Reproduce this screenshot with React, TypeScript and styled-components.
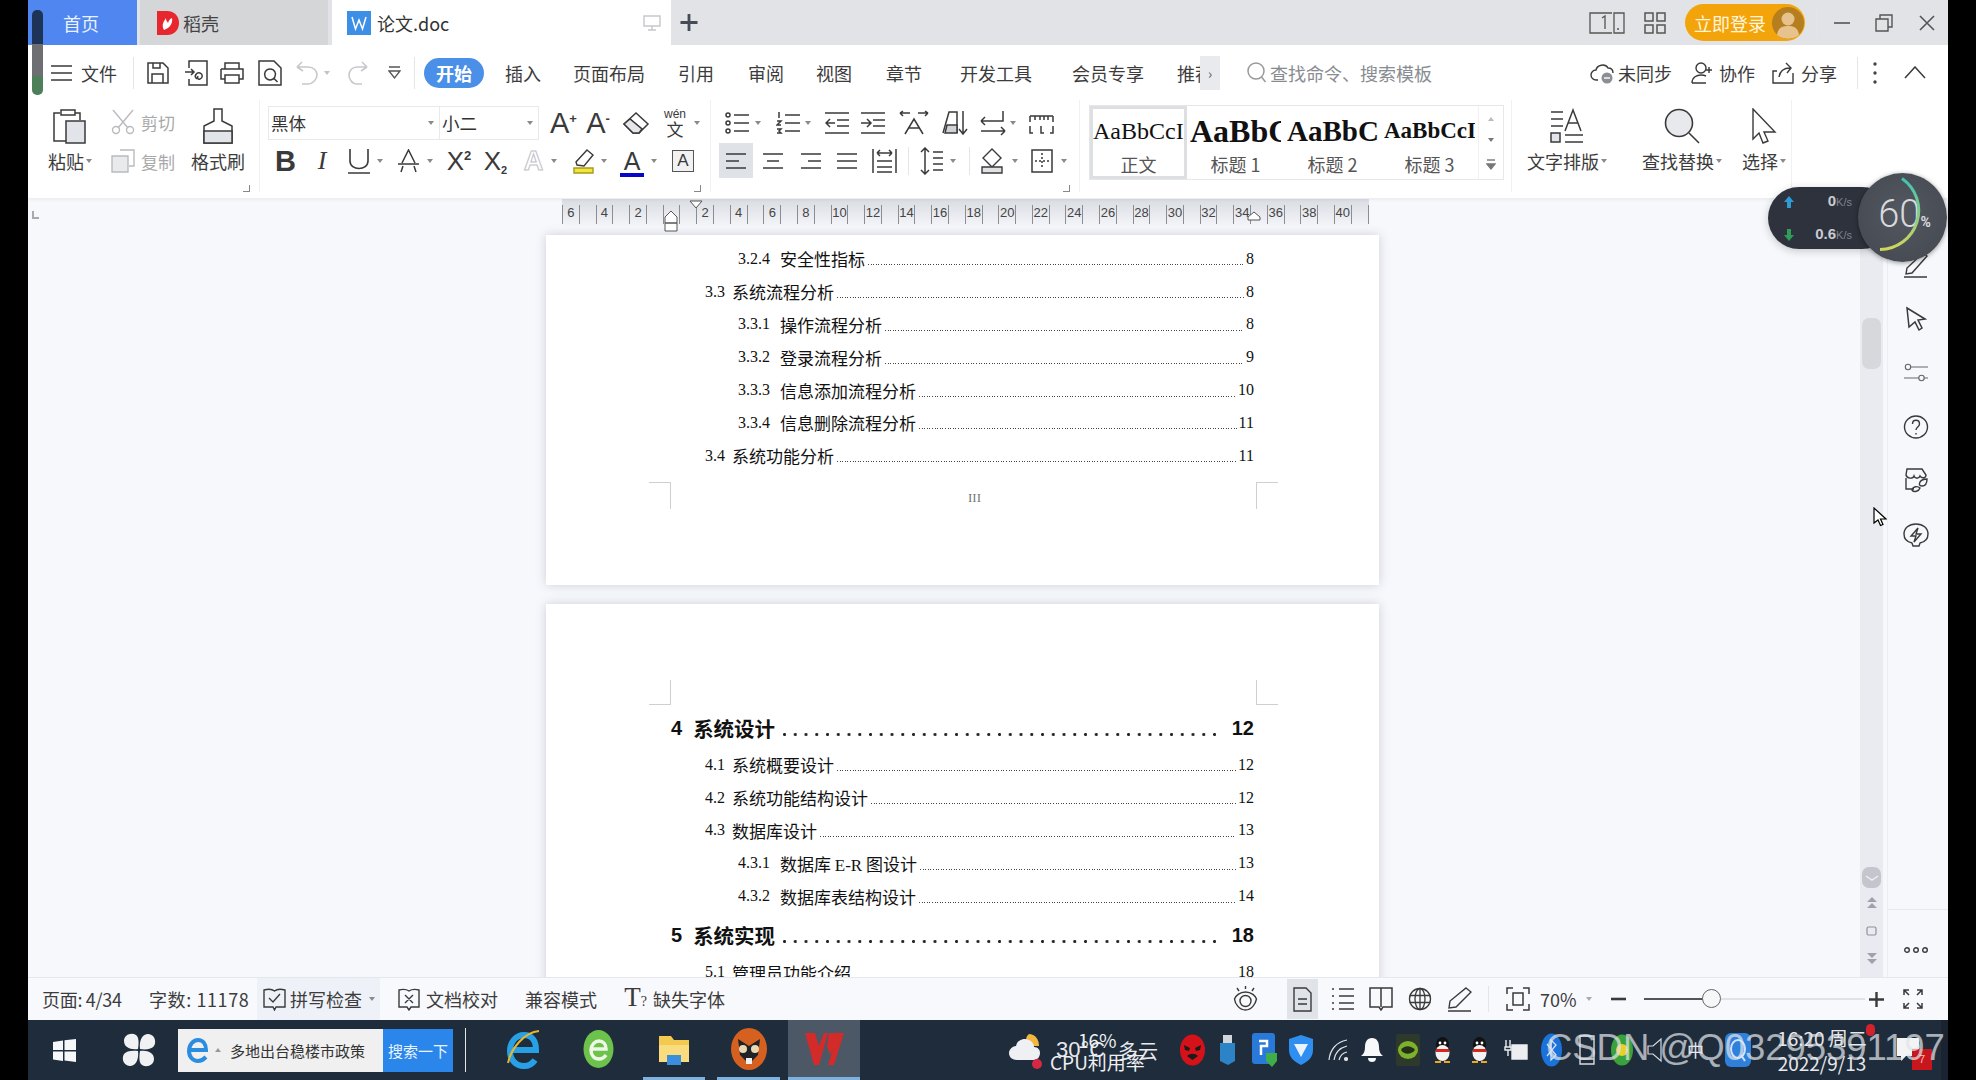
import React from 'react';
import styled, { createGlobalStyle } from 'styled-components';

const CJK = `"Noto Sans CJK SC", "Liberation Sans", sans-serif`;
const SERIF = `"Liberation Serif", "Noto Sans CJK SC", serif`;

const Global = createGlobalStyle`
  html, body { margin: 0; padding: 0; background: #000; overflow: hidden; }
  body { font-family: ${CJK}; color: #333; }
`;

const Root = styled.div`
  position: relative; width: 1976px; height: 1080px; background: #000; overflow: hidden;
  display: flex; justify-content: center;
`;
const Main = styled.div`
  width: 1920px; height: 1080px; display: flex; flex-direction: column; background: #fff;
`;

const Ic = styled.svg<{ $ml?: number; $sw?: number; $c?: string }>`
  flex: none; display: block; margin-left: ${p => p.$ml ?? 0}px; fill: none;
  stroke: ${p => p.$c ?? '#3a3a3a'}; stroke-width: ${p => p.$sw ?? 1.4};
`;
const Caret = styled.i<{ $ml?: number; $c?: string; $up?: boolean }>`
  flex: none; display: block; width: 0; height: 0; margin-left: ${p => p.$ml ?? 0}px;
  border-left: 3px solid transparent; border-right: 3px solid transparent;
  border-top: 4px solid ${p => p.$c ?? '#8a8a8a'};
  ${p => (p.$up ? 'transform: rotate(180deg);' : '')}
`;
const VSep = styled.i<{ $ml?: number; $h?: number }>`
  flex: none; display: block; width: 1px; height: ${p => p.$h ?? 32}px;
  margin-left: ${p => p.$ml ?? 0}px; background: #e4e5e8;
`;

/* ---------- tab bar ---------- */
const TabBar = styled.div`
  flex: none; height: 45px; display: flex; align-items: stretch; background: #e1e3e6;
`;
const HomeTab = styled.div`
  width: 109px; background: #4f86ef; color: #eaf1ff; font-size: 18px;
  display: flex; align-items: center; padding-left: 35px; box-sizing: border-box;
`;
const ShellTab = styled.div`
  width: 188px; margin-left: 3px; background: #d5d6d8; font-size: 18px; color: #444;
  display: flex; align-items: center; padding-left: 17px; box-sizing: border-box; gap: 4px;
`;
const DocTab = styled.div`
  width: 339px; margin-left: 4px; background: #fff; font-size: 18px; color: #333;
  display: flex; align-items: center; padding-left: 15px; box-sizing: border-box; gap: 6px;
`;
const DocName = styled.span`flex: 1;`;
const CastIcon = styled(Ic)`margin-right: 10px;`;
const WinCluster = styled.div`
  margin-left: auto; display: flex; align-items: center; padding-right: 13px;
`;
const LoginPill = styled.div`
  margin-left: 19px; width: 120px; height: 37px; border-radius: 19px; background: #f4a40b;
  color: #fff6dc; font-size: 18px; display: flex; align-items: center; padding-left: 9px;
  box-sizing: border-box; gap: 6px;
`;

/* ---------- menu bar ---------- */
const MenuBar = styled.div`
  flex: none; height: 55px; display: flex; align-items: center; background: #fff;
`;
const MenuText = styled.span<{ $ml?: number; $c?: string }>`
  flex: none; font-size: 18px; margin-left: ${p => p.$ml ?? 0}px; color: ${p => p.$c ?? '#3c3c3c'};
  white-space: nowrap; line-height: 30px;
`;
const ClippedTab = styled(MenuText)`width: 23px; overflow: hidden;`;
const ActivePill = styled.span<{ $ml: number }>`
  flex: none; margin-left: ${p => p.$ml}px; width: 60px; height: 30px; border-radius: 15px;
  background: #4a8fe8; color: #fff; font-size: 18px; font-weight: 700;
  display: flex; align-items: center; justify-content: center;
`;
const MoreTabs = styled.span`
  flex: none; width: 20px; height: 34px; background: #e9eaed; color: #555; font-size: 14px;
  display: flex; align-items: center; justify-content: center;
`;
const MenuRight = styled.div`
  margin-left: auto; padding-right: 22px; display: flex; align-items: center;
`;

/* ---------- ribbon ---------- */
const Ribbon = styled.div`
  flex: none; height: 98px; display: flex; background: #fff; position: relative; z-index: 2;
  box-shadow: 0 2px 3px rgba(0, 0, 0, .05);
`;
const Group = styled.div<{ $w: number; $ml?: number }>`
  flex: none; width: ${p => p.$w}px; margin-left: ${p => p.$ml ?? 0}px; position: relative;
  box-sizing: border-box; border-right: 1px solid #f0f1f3; height: 92px;
`;
const FlowGroup = styled(Group)`display: flex; align-items: flex-start;`;
const Launcher = styled.i`
  position: absolute; right: 9px; bottom: 0; width: 6px; height: 6px;
  border-right: 1px solid #888; border-bottom: 1px solid #888;
`;
const LargeTool = styled.div<{ $w: number; $ml: number }>`
  flex: none; width: ${p => p.$w}px; margin-left: ${p => p.$ml}px; padding-top: 7px;
  display: flex; flex-direction: column; align-items: center;
`;
const LargeIcon = styled.div`height: 37px; display: flex; align-items: center;`;
const LargeLabel = styled.div`
  margin-top: 3px; height: 28px; font-size: 18px; color: #3c3c3c; display: flex; align-items: center;
  gap: 2px; white-space: nowrap;
`;
const SmallStack = styled.div<{ $ml: number }>`
  flex: none; margin-left: ${p => p.$ml}px; padding-top: 8px; display: flex; flex-direction: column; gap: 11px;
`;
const SmallTool = styled.div`
  display: flex; align-items: center; gap: 6px; height: 28px; color: #a9a9a9; font-size: 17px;
`;
const ToolRows = styled.div`padding-top: 5px; display: flex; flex-direction: column; gap: 3px;`;
const ToolRow = styled.div`height: 35px; display: flex; align-items: center;`;
const FontBox = styled.div`
  flex: none; margin-left: 8px; width: 271px; height: 34px; border: 1px solid #e8e9ec; box-sizing: border-box;
  display: flex; align-items: center; font-size: 17.5px; color: #333;
`;
const FontName = styled.div`
  width: 171px; height: 100%; box-sizing: border-box; border-right: 1px solid #e8e9ec; padding-left: 2px; padding-right: 5px;
  display: flex; align-items: center; justify-content: space-between;
`;
const FontSizeBox = styled(FontName)`width: 98px; border-right: 0;`;
const Letter = styled.span<{ $ml?: number; $w: number; $s?: number; $c?: string; $b?: boolean; $i?: boolean; $serif?: boolean; $cjk?: boolean }>`
  flex: none; display: block; width: ${p => p.$w}px; margin-left: ${p => p.$ml ?? 0}px;
  font-family: ${p => (p.$cjk ? CJK : p.$serif ? SERIF : `"Liberation Sans", sans-serif`)};
  font-size: ${p => p.$s ?? 26}px; font-weight: ${p => (p.$b ? 700 : 400)}; font-style: ${p => (p.$i ? 'italic' : 'normal')};
  color: ${p => p.$c ?? '#3a3a3a'}; line-height: 30px; text-align: center; white-space: nowrap;
  position: relative;
  sup { font-size: 13px; line-height: 0; font-weight: 700; vertical-align: 10px; }
  sub { font-size: 11px; line-height: 0; font-weight: 700; vertical-align: -4px; }
  small { font-size: 14px; }
`;
const OutlineLetter = styled(Letter)`
  color: transparent; -webkit-text-stroke: 1px #bfc1c5; font-weight: 700;
`;
const UnderBar = styled.i<{ $c: string; $h?: number }>`
  position: absolute; left: 0; right: 0; bottom: -1px; height: ${p => p.$h ?? 2}px; background: ${p => p.$c};
`;
const BoxedLetter = styled(Letter)`
  border: 1.5px solid #555; box-sizing: border-box; height: 22px; line-height: 19px; background: #f2f2f2;
`;
const Phonetic = styled.div<{ $ml: number }>`
  flex: none; margin-left: ${p => p.$ml}px; width: 30px; display: flex; flex-direction: column; align-items: center; color: #3a3a3a;
`;
const PhoneticTop = styled.span`font: 12px/12px "Liberation Sans", sans-serif;`;
const PhoneticBase = styled.span`font-size: 17px; line-height: 18px;`;
const ActiveAlign = styled.div<{ $ml: number }>`
  flex: none; width: 34px; height: 35px; margin-left: ${p => p.$ml}px; background: #dfe3e8;
  display: flex; align-items: center; justify-content: center;
`;
const StyleGallery = styled.div`
  flex: none; margin-left: 9px; margin-top: 5px; width: 415px; height: 75px; box-sizing: border-box;
  border: 1px solid #e6e7ea; display: flex;
`;
const StyleCell = styled.div<{ $active?: boolean }>`
  flex: none; width: 97px; box-sizing: border-box; overflow: hidden; height: 100%;
  border: 3px solid ${p => (p.$active ? '#dedfe1' : 'transparent')};
  display: flex; flex-direction: column; align-items: center;
`;
const StyleSample = styled.div<{ $s: number; $b?: boolean }>`
  width: 91px; overflow: hidden; white-space: nowrap; height: 43px; line-height: 44px; color: #111; flex: none;
  font-family: ${SERIF}; font-size: ${p => p.$s}px; font-weight: ${p => (p.$b ? 700 : 400)}; text-align: left;
`;
const StyleName = styled.div`font-size: 18px; color: #555; line-height: 24px;`;
const GalleryArrows = styled.div`
  flex: 1; display: flex; flex-direction: column; align-items: center; justify-content: space-between;
  padding: 11px 0 8px; border-left: 1px solid #f0f1f3;
`;

/* ---------- workspace ---------- */
const Workspace = styled.div`flex: 1; min-height: 0; display: flex; background: #f6f8fc;`;
const Canvas = styled.div`
  flex: 1; position: relative; overflow: hidden; display: flex; flex-direction: column;
`;
const Ruler = styled.div`flex: none; height: 37px; padding-left: 534px; position: relative; display: flex;`;
const RulerBand = styled.div`
  margin-top: 1px; height: 27px; display: flex; padding-top: 6px; box-sizing: border-box;
  background: linear-gradient(#d9dce2, #f4f5f9);
`;
const RulerCell = styled.div`flex: none; width: 33.57px; display: flex; height: 19px;`;
const RulerHalf = styled.div`
  width: 50%; box-sizing: border-box; border-left: 1px solid #8b8d92; font: 13px/15px "Liberation Sans", sans-serif;
  color: #444; text-align: center; white-space: nowrap;
`;
const RulerEnd = styled.i`flex: none; width: 1px; height: 19px; background: #8b8d92;`;
const RulerMark = styled.svg<{ $x: number; $y: number }>`
  position: absolute; left: ${p => p.$x}px; top: ${p => p.$y}px; fill: #fff; stroke: #555; stroke-width: 1;
`;
const LCorner = styled.i`
  position: absolute; left: 4px; top: 13px; width: 5px; height: 6px;
  border-left: 2px solid #aaa; border-bottom: 2px solid #aaa;
`;
const Page = styled.div<{ $h: number; $mt?: number; $pt?: number }>`
  flex: none; margin-left: 518px; margin-top: ${p => p.$mt ?? 0}px; width: 833px; height: ${p => p.$h}px;
  padding-top: ${p => p.$pt ?? 0}px;
  background: #fff; box-shadow: 0 0 10px rgba(80, 85, 100, .24); box-sizing: border-box;
`;
const TocRow = styled.div<{ $level: number }>`
  display: flex; align-items: center; box-sizing: border-box; color: #111;
  height: ${p => (p.$level === 1 ? 41 : 32.8)}px;
  margin-top: ${p => (p.$level === 1 ? 2.5 : 0)}px;
  padding-left: ${p => (p.$level === 1 ? 125 : p.$level === 2 ? 159 : 192)}px; padding-right: 125px;
  font-size: ${p => (p.$level === 1 ? 20.5 : 17)}px; font-weight: ${p => (p.$level === 1 ? 700 : 400)};
`;
const TocNum = styled.span<{ $level: number }>`
  font-family: ${p => (p.$level === 1 ? `"Liberation Sans", sans-serif` : SERIF)};
  font-size: ${p => (p.$level === 1 ? 20 : 16)}px;
  margin-right: ${p => (p.$level === 1 ? 11 : p.$level === 2 ? 7 : 10)}px;
`;
const TocName = styled.span`white-space: pre;`;
const Latin = styled.span`font-family: ${SERIF};`;
const Leader = styled.i<{ $heavy?: boolean }>`
  flex: 1; display: block; margin: 12px ${p => (p.$heavy ? 16 : 2)}px 0 ${p => (p.$heavy ? 8 : 3)}px;
  height: ${p => (p.$heavy ? 3 : 1)}px;
  background-image: ${p =>
    p.$heavy
      ? 'radial-gradient(circle at 1.5px 1.5px, #222 1.3px, transparent 1.6px)'
      : 'repeating-linear-gradient(90deg, #444 0 1px, transparent 1px 2.6px)'};
  background-size: ${p => (p.$heavy ? '10.75px 3px' : 'auto')};
`;
const TocPage = styled.span<{ $level: number }>`
  font-family: ${p => (p.$level === 1 ? `"Liberation Sans", sans-serif` : SERIF)};
  font-size: ${p => (p.$level === 1 ? 20 : 16)}px;
`;
const MarginRow = styled.div<{ $mt: number; $h: number }>`
  margin: ${p => p.$mt}px 101px 0 103px; height: ${p => p.$h}px; display: flex; justify-content: space-between; align-items: center;
`;
const CropMark = styled.i<{ $pos: 'tl' | 'tr' | 'bl' | 'br' }>`
  display: block; width: 22px; height: 100%; box-sizing: border-box;
  ${p => (p.$pos[0] === 't' ? 'border-top' : 'border-bottom')}: 1px solid #cfcfcf;
  ${p => (p.$pos[1] === 'l' ? 'border-right' : 'border-left')}: 1px solid #cfcfcf;
`;
const Folio = styled.span`font: 13px ${SERIF}; color: #777; margin: 5px 0 0 22px;`;
const ScrollTrack = styled.div`
  flex: none; width: 23px; margin-right: 4px; background: #e9ebf0; display: flex; flex-direction: column;
  align-items: center; padding: 120px 0 13px; box-sizing: border-box;
`;
const ScrollThumb = styled.div`width: 19px; height: 51px; border-radius: 7px; background: #d6d8dc;`;
const ScrollDown = styled.div`
  margin-top: auto; width: 19px; height: 21px; border-radius: 7px; background: #c3c6cc;
  display: flex; align-items: center; justify-content: center;
`;
const ScrollGlyphs = styled.div`margin-top: 9px; display: flex; flex-direction: column; gap: 16.5px; align-items: center;`;
const SideBar = styled.div`
  flex: none; width: 61px; border-left: 1px solid #eceef2; box-sizing: border-box; display: flex; flex-direction: column; align-items: center;
`;
const SideIcons = styled.div`padding: 54px 5px 0 0; display: flex; flex-direction: column; gap: 28px; align-items: center;`;
const SideFoot = styled.div`
  margin-top: auto; width: 100%; height: 68px; border-top: 1px solid #e7e9ed; display: flex; justify-content: center; padding: 37px 5px 0 0; box-sizing: border-box;
`;

/* ---------- status bar ---------- */
const StatusBar = styled.div`
  flex: none; height: 43px; background: #f8f9fc; border-top: 1px solid #e6e7eb; box-sizing: border-box;
  display: flex; align-items: center; font-size: 18px; color: #3c3c3c;
`;
const StatusText = styled.span<{ $ml: number; $w?: number; $ls?: number }>`
  flex: none; margin-left: ${p => p.$ml}px; white-space: nowrap; letter-spacing: ${p => p.$ls ?? 0}px;
  ${p => (p.$w ? `width: ${p.$w}px;` : '')}
`;
const SpellCheck = styled.div`
  flex: none; margin-left: 7px; width: 123px; height: 42px; background: #eef2f8; display: flex; align-items: center; padding-left: 6px; box-sizing: border-box; gap: 4px;
`;
const StatusRight = styled.div`margin-left: auto; padding-right: 24px; display: flex; align-items: center;`;
const ViewActive = styled.div`
  flex: none; width: 31px; height: 40px; margin-left: 29px; background: #e0e3e8; display: flex; align-items: center; justify-content: center;
`;
const ZoomTrack = styled.div`
  flex: none; margin-left: 18px; width: 221px; height: 2px; background: #e1e2e6; position: relative;
  &::before { content: ''; position: absolute; left: 0; top: 0; width: 67px; height: 2px; background: #555; }
`;
const ZoomKnob = styled.i`
  position: absolute; left: 58px; top: -9px; width: 19px; height: 19px; border-radius: 50%; box-sizing: border-box;
  background: #f6f7f9; border: 1.5px solid #666;
`;

/* ---------- taskbar ---------- */
const Taskbar = styled.div`
  flex: none; height: 60px; background: #1f2c3b; display: flex; align-items: center; color: #e7e9ec;
  box-shadow: inset -7px 0 0 #1a2430;
`;
const SearchBox = styled.div`
  flex: none; margin-left: 22px; width: 275px; height: 43px; background: #f0f0f0; display: flex; align-items: center;
`;
const SearchHint = styled.span`flex: 1; font-size: 15px; color: #333; display: flex; align-items: center; white-space: nowrap;`;
const SearchPhrase = styled.span`margin-left: 9px;`;
const SearchBtn = styled.span`
  flex: none; width: 70px; height: 100%; background: #2a86ea; color: #eaf4ff; font-size: 15px;
  display: flex; align-items: center; justify-content: center;
`;
const TaskApp = styled.div<{ $ml: number; $w: number; $open?: boolean; $active?: boolean }>`
  flex: none; margin-left: ${p => p.$ml}px; width: ${p => p.$w}px; height: 60px; box-sizing: border-box;
  display: flex; align-items: center; justify-content: center;
  background: ${p => (p.$active ? '#4d5866' : 'transparent')};
  border-bottom: 3px solid ${p => (p.$open ? '#7db2e0' : 'transparent')};
`;
const Weather = styled.div`
  flex: none; position: relative; margin-left: 11px; width: 102px; height: 60px; display: flex; align-items: center; justify-content: space-between; font-size: 20px;
`;
const Temp = styled.span`font-family: "Liberation Sans", sans-serif; font-size: 22px;`;
const CpuTop = styled.span`position: absolute; left: 22px; top: 6px; font-size: 19px; color: #eef0f3;`;
const CpuBottom = styled.span`position: absolute; left: -6px; top: 28px; font-size: 19px; color: #eef0f3; white-space: nowrap;`;
const Clock = styled.div`
  flex: none; position: relative; margin-left: 25px; width: 92px; font: 19px/25px ${CJK}; color: #e7e9ec; text-align: center; white-space: nowrap;
`;
const TrayBadge = styled.i`position: absolute; right: -7px; top: -1px; width: 9px; height: 12px; border-radius: 5px; background: #d3232a;`;
const MsgWrap = styled.div`flex: none; position: relative; margin-left: 29px; width: 22px; height: 24px;`;
const MsgBadge = styled.span`
  position: absolute; left: 15px; top: 11px; width: 20px; height: 21px; background: #c8161d; color: #fbb;
  font: 11px/21px "Liberation Sans", sans-serif; text-align: center;
`;

/* ---------- overlays ---------- */
const Gadget = styled.div`position: absolute; left: 1768px; top: 173px; width: 179px; height: 89px; z-index: 5;`;
const GadgetPill = styled.div`
  position: absolute; left: 0; top: 14px; width: 125px; height: 62px; border-radius: 31px; background: #2d323c;
  display: flex; flex-direction: column; justify-content: center; gap: 13px; padding-left: 16px; box-sizing: border-box;
  box-shadow: 0 2px 8px rgba(0, 0, 0, .2);
`;
const GadgetRow = styled.div`
  display: flex; align-items: center; height: 20px; width: 68px; justify-content: space-between;
  font: 700 15px/20px "Liberation Sans", sans-serif; color: #c9ccd2; white-space: nowrap;
  small { font-size: 11px; font-weight: 400; color: #7f848d; }
`;
const GadgetDial = styled.div`
  position: absolute; right: 0; top: 0; width: 89px; height: 89px; border-radius: 50%;
  background: radial-gradient(circle at 50% 45%, #53575f, #43474f); box-shadow: 0 1px 5px rgba(0, 0, 0, .4);
  display: flex; align-items: center; justify-content: center;
`;
const DialRing = styled.svg`position: absolute; inset: 0; fill: none;`;
const DialValue = styled.span`
  font: 300 38px/38px Roboto, sans-serif; color: #d8dade; margin-left: 4px;
  small { font-size: 14px; font-weight: 700; }
`;
const Pointer = styled.svg`position: absolute; left: 1873px; top: 507px; z-index: 6;`;
const ScrollChip = styled.div`
  position: absolute; left: 32px; top: 10px; width: 11px; height: 85px; border-radius: 5px; z-index: 6;
  background: linear-gradient(#1e3358 0 40%, #6d6f72 40% 78%, #4d7f58 78%);
`;
const Watermark = styled.div`
  position: absolute; left: 1546px; top: 1027px; font: 36.5px/42px "Liberation Sans", sans-serif;
  color: rgba(225, 228, 232, .72); white-space: nowrap; z-index: 7; letter-spacing: -.05px;
`;

/* ---------- data ---------- */
type Toc = { level: number; num: string; name: React.ReactNode; page: string };
const page1: Toc[] = [
  { level: 3, num: '3.2.4', name: '安全性指标', page: '8' },
  { level: 2, num: '3.3', name: '系统流程分析', page: '8' },
  { level: 3, num: '3.3.1', name: '操作流程分析', page: '8' },
  { level: 3, num: '3.3.2', name: '登录流程分析', page: '9' },
  { level: 3, num: '3.3.3', name: '信息添加流程分析', page: '10' },
  { level: 3, num: '3.3.4', name: '信息删除流程分析', page: '11' },
  { level: 2, num: '3.4', name: '系统功能分析', page: '11' },
];
const page2: Toc[] = [
  { level: 1, num: '4', name: '系统设计', page: '12' },
  { level: 2, num: '4.1', name: '系统概要设计', page: '12' },
  { level: 2, num: '4.2', name: '系统功能结构设计', page: '12' },
  { level: 2, num: '4.3', name: '数据库设计', page: '13' },
  { level: 3, num: '4.3.1', name: <>数据库 <Latin>E-R</Latin> 图设计</>, page: '13' },
  { level: 3, num: '4.3.2', name: '数据库表结构设计', page: '14' },
  { level: 1, num: '5', name: '系统实现', page: '18' },
  { level: 2, num: '5.1', name: '管理员功能介绍', page: '18' },
];
const TocList = ({ rows }: { rows: Toc[] }) => (
  <>
    {rows.map(r => (
      <TocRow key={r.num} $level={r.level}>
        <TocNum $level={r.level}>{r.num}</TocNum>
        <TocName>{r.name}</TocName>
        <Leader $heavy={r.level === 1} />
        <TocPage $level={r.level}>{r.page}</TocPage>
      </TocRow>
    ))}
  </>
);
const rulerLabels = ['6', '4', '2', '', ...Array.from({ length: 20 }, (_, i) => String((i + 1) * 2))];

const AlignIcon = ({ ml, kind }: { ml?: number; kind: 'l' | 'c' | 'r' | 'j' }) => {
  const a = kind === 'l' ? ['M1 4h20', 'M1 11h13', 'M1 18h20'] :
    kind === 'c' ? ['M1 4h20', 'M5 11h12', 'M1 18h20'] :
    kind === 'r' ? ['M1 4h20', 'M8 11h13', 'M1 18h20'] : ['M1 4h20', 'M1 11h20', 'M1 18h20'];
  return <Ic $ml={ml} width={22} height={22} viewBox="0 0 22 22"><path d={a.join('')} /></Ic>;
};
const QQ = ({ ml }: { ml: number }) => (
  <Ic $ml={ml} width={21} height={28} viewBox="0 0 21 28" $sw={0}>
    <ellipse cx="10.500" cy="9" rx="6.500" ry="8" fill="#111" />
    <ellipse cx="10.500" cy="17" rx="7" ry="8" fill="#f3f3f3" />
    <path d="M4 13h13v3H4z" fill="#d8261f" />
    <path d="M3 25h6v2H3zM12 25h6v2h-6z" fill="#f0a818" />
    <circle cx="8" cy="7" r="1.400" fill="#fff" /><circle cx="13" cy="7" r="1.400" fill="#fff" />
  </Ic>
);

export default function App() {
  return (
    <Root>
      <Global />
      <Main>
        <TabBar>
          <HomeTab>首页</HomeTab>
          <ShellTab>
            <Ic width={22} height={24} viewBox="0 0 22 24" $sw={0}>
              <path d="M0 0h10c8 0 12 6 12 12s-4 12-12 12H0z" fill="#e8262e" />
              <path d="M7 19c-3-5 0-9 2-12 0 3 1 3 2 5 1-3 2-4 4-5 1 5-2 10-8 12z" fill="#fff" />
            </Ic>
            稻壳
          </ShellTab>
          <DocTab>
            <Ic width={24} height={24} viewBox="0 0 24 24" $sw={0}>
              <rect width="24" height="24" fill="#3d8ee6" />
              <path d="M5 6l3.500 12L12 9l3.500 9L19 6" stroke="#fff" strokeWidth="1.500" fill="none" />
            </Ic>
            <DocName>论文.doc</DocName>
            <CastIcon width={18} height={16} viewBox="0 0 18 16" $c="#c5c7ca">
              <path d="M1 1h16v10H1zM9 11v4M5 15h8" />
            </CastIcon>
          </DocTab>
          <Ic $ml={9} width={18} height={45} viewBox="0 0 18 45" $sw={2.8} $c="#444c58">
            <path d="M9 14v17M0.500 22.500h17" />
          </Ic>
          <WinCluster>
            <Ic width={36} height={22} viewBox="0 0 36 22" $sw={1.3} $c="#555">
              <path d="M23 1H1v20h22M25 1h10v20H25zM28 17h2" />
              <path d="M13 6l3-2v13" />
            </Ic>
            <Ic $ml={19} width={22} height={22} viewBox="0 0 22 22" $sw={1.5} $c="#555">
              <path d="M1 1h8v8H1zM13 1h8v8h-8zM1 13h8v8H1zM13 13h8v8h-8z" />
            </Ic>
            <LoginPill>
              立即登录
              <Ic width={32} height={32} viewBox="0 0 32 32" $sw={0}>
                <circle cx="16" cy="16" r="16" fill="#b57f20" />
                <circle cx="16" cy="12" r="6.500" fill="#e7c28d" />
                <path d="M5 28c1-8 6-9 11-9s10 1 11 9c-6 5-16 5-22 0z" fill="#e7c28d" />
              </Ic>
            </LoginPill>
            <VSep $ml={11} $h={30} />
            <Ic $ml={17} width={16} height={4} viewBox="0 0 16 4" $c="#555" $sw={1.6}><path d="M0 2h16" /></Ic>
            <Ic $ml={25} width={18} height={18} viewBox="0 0 18 18" $c="#555"><path d="M1 5h12v12H1zM5 5V1h12v12h-4" /></Ic>
            <Ic $ml={26} width={16} height={16} viewBox="0 0 16 16" $c="#555" $sw={1.6}><path d="M1 1l14 14M15 1L1 15" /></Ic>
          </WinCluster>
        </TabBar>

        <MenuBar>
          <Ic $ml={22} width={23} height={18} viewBox="0 0 23 18" $sw={1.6}><path d="M1 2h21M1 9h21M1 16h21" /></Ic>
          <MenuText $ml={8}>文件</MenuText>
          <VSep $ml={16} />
          <Ic $ml={12} width={24} height={24} viewBox="0 0 24 24" $sw={1.5}>
            <path d="M2 2h15l5 5v15H2zM6 22v-9h11v9M7 2v5h7V2" />
          </Ic>
          <Ic $ml={14} width={24} height={26} viewBox="0 0 24 26" $sw={1.5}>
            <path d="M5 8V1h18v24H5v-6M1 12h9M7 9l3 3-3 3M13 19c-4-3 0-7 3-6 3 1 3 5 0 6-2 1-3-1-2-3" />
          </Ic>
          <Ic $ml={12} width={24} height={24} viewBox="0 0 24 24" $sw={1.5}>
            <path d="M5 8V2h14v6M1 8h22v10h-4M5 18H1V8M5 14h14v8H5z" />
          </Ic>
          <Ic $ml={14} width={24} height={26} viewBox="0 0 24 26" $sw={1.5}>
            <path d="M1 1h15l7 7v17H1zM12 20a5.500 5.500 0 1 1 .1 0zM15.500 18l4 4" />
          </Ic>
          <Ic $ml={14} width={22} height={24} viewBox="0 0 22 24" $c="#c6c8cc" $sw={1.6}>
            <path d="M1 6l5-5M1 6l6 4M1 6h11c6 0 9 4 9 8s-4 9-9 9H6" />
          </Ic>
          <Caret $ml={6} $c="#c0c2c6" />
          <Ic $ml={18} width={20} height={24} viewBox="0 0 20 24" $c="#c6c8cc" $sw={1.6}>
            <path d="M19 6l-5-5M19 6l-6 4M19 6H9c-5 0-8 4-8 8s3 9 8 9h5" />
          </Ic>
          <Ic $ml={20} width={13} height={14} viewBox="0 0 13 14" $sw={1.3} $c="#555"><path d="M1 1h11M1 5l5.500 7L12 5z" /></Ic>
          <VSep $ml={13} />
          <ActivePill $ml={9}>开始</ActivePill>
          <MenuText $ml={21}>插入</MenuText>
          <MenuText $ml={32}>页面布局</MenuText>
          <MenuText $ml={33}>引用</MenuText>
          <MenuText $ml={34}>审阅</MenuText>
          <MenuText $ml={32}>视图</MenuText>
          <MenuText $ml={34}>章节</MenuText>
          <MenuText $ml={38}>开发工具</MenuText>
          <MenuText $ml={40}>会员专享</MenuText>
          <ClippedTab $ml={33}>推荐</ClippedTab>
          <MoreTabs>›</MoreTabs>
          <Ic $ml={27} width={20} height={22} viewBox="0 0 20 22" $c="#999" $sw={1.5}>
            <circle cx="9" cy="9" r="8" /><path d="M14.500 15l4 5" />
          </Ic>
          <MenuText $ml={3} $c="#888c91">查找命令、搜索模板</MenuText>
          <MenuRight>
            <Ic width={25} height={24} viewBox="0 0 25 24" $sw={1.4}>
              <path d="M8 19H6a5 5 0 0 1 0-10c1-5 9-7 12-2 3 0 5 2 5 5" />
              <circle cx="17" cy="17" r="5.500" fill="#8a8f96" stroke="none" /><path d="M14 17h6" stroke="#fff" />
            </Ic>
            <MenuText $ml={3}>未同步</MenuText>
            <Ic $ml={19} width={23} height={22} viewBox="0 0 23 22" $sw={1.4}>
              <circle cx="10" cy="6" r="5" /><path d="M1 21c0-6 5-8 9-8 2 0 4 .5 5 1M1 21h14M18 5v6M15 8h6" />
            </Ic>
            <MenuText $ml={5}>协作</MenuText>
            <Ic $ml={17} width={23} height={22} viewBox="0 0 23 22" $sw={1.4}>
              <path d="M5 9H1v12h20V11M7 15c1-6 5-9 11-9M14 1l5 5-4 5" />
            </Ic>
            <MenuText $ml={6}>分享</MenuText>
            <VSep $ml={20} />
            <Ic $ml={14} width={6} height={24} viewBox="0 0 6 24" $sw={0}>
              <circle cx="3" cy="3" r="1.700" fill="#444" /><circle cx="3" cy="12" r="1.700" fill="#444" /><circle cx="3" cy="21" r="1.700" fill="#444" />
            </Ic>
            <Ic $ml={26} width={22} height={13} viewBox="0 0 22 13" $sw={1.5}><path d="M1 12L11 1l10 11" /></Ic>
          </MenuRight>
        </MenuBar>

        <Ribbon>
          <FlowGroup $w={232}>
            <LargeTool $w={50} $ml={17}>
              <LargeIcon>
                <Ic width={34} height={36} viewBox="0 0 34 36" $sw={1.5}>
                  <path d="M7 5H1v28h12M22 5h5v7M8 2h14v5H8z" />
                  <path d="M13 13h19v22H13z" fill="#e1e4e8" />
                </Ic>
              </LargeIcon>
              <LargeLabel>粘贴<Caret /></LargeLabel>
            </LargeTool>
            <SmallStack $ml={16}>
              <SmallTool>
                <Ic width={24} height={26} viewBox="0 0 24 26" $c="#b9bbbf" $sw={1.4}>
                  <path d="M2 1l15 18M22 1L7 19" /><circle cx="5" cy="21" r="3.500" /><circle cx="19" cy="21" r="3.500" />
                </Ic>
                剪切
              </SmallTool>
              <SmallTool>
                <Ic width={24} height={24} viewBox="0 0 24 24" $c="#b9bbbf" $sw={1.4}>
                  <path d="M9 1h14v16h-5" /><path d="M1 7h16v16H1z" fill="#e9eaec" />
                </Ic>
                复制
              </SmallTool>
            </SmallStack>
            <LargeTool $w={54} $ml={16}>
              <LargeIcon>
                <Ic width={30} height={36} viewBox="0 0 30 36" $sw={1.5}>
                  <path d="M11 1h8v12l10 5v17H1V18l10-5z" /><path d="M1 23h28v12H1z" fill="#e1e4e8" />
                </Ic>
              </LargeIcon>
              <LargeLabel>格式刷</LargeLabel>
            </LargeTool>
            <Launcher />
          </FlowGroup>

          <Group $w={451}>
            <ToolRows>
              <ToolRow>
                <FontBox>
                  <FontName>黑体<Caret /></FontName>
                  <FontSizeBox>小二<Caret /></FontSizeBox>
                </FontBox>
                <Letter $ml={11} $w={25} $s={29}>A<sup>+</sup></Letter>
                <Letter $ml={11} $w={24} $s={29}>A<sup>-</sup></Letter>
                <Ic $ml={13} width={27} height={24} viewBox="0 0 27 24" $sw={1.5}>
                  <path d="M1 13L13 2l12 11-9 9h-6zM7 8l12 10" />
                  <path d="M1 13l6-5 12 10-3 4h-6z" fill="#e4e6ea" />
                </Ic>
                <Phonetic $ml={10}>
                  <PhoneticTop>wén</PhoneticTop>
                  <PhoneticBase>文</PhoneticBase>
                </Phonetic>
                <Caret $ml={4} />
              </ToolRow>
              <ToolRow>
                <Letter $ml={15} $w={21} $s={29} $b>B</Letter>
                <Letter $ml={18} $w={16} $s={26} $i $serif>I</Letter>
                <Ic $ml={18} width={22} height={26} viewBox="0 0 22 26" $sw={1.6}>
                  <path d="M2 1v12c0 10 18 10 18 0V1M0 25h22" />
                </Ic>
                <Caret $ml={7} />
                <Ic $ml={14} width={23} height={24} viewBox="0 0 23 24" $sw={1.5}>
                  <path d="M5 14L11.500 1 18 14M1 15h21M4 23l2-6M19 23l-2-6" />
                </Ic>
                <Caret $ml={7} />
                <Letter $ml={13} $w={26} $s={26}>X<sup>2</sup></Letter>
                <Letter $ml={11} $w={25} $s={26}>X<sub>2</sub></Letter>
                <OutlineLetter $ml={14} $w={23} $s={27}>A</OutlineLetter>
                <Caret $ml={6} />
                <Ic $ml={14} width={25} height={26} viewBox="0 0 25 26" $sw={1.4}>
                  <path d="M16 2l6 5-9 11-7-1-1-3z" /><path d="M3 20h19v5H3z" fill="#f3e63a" stroke="#a59a1e" />
                </Ic>
                <Caret $ml={5} />
                <Letter $ml={13} $w={24} $s={25}>A<UnderBar $c="#0707c8" $h={4} /></Letter>
                <Caret $ml={7} />
                <BoxedLetter $ml={15} $w={22} $s={17}>A</BoxedLetter>
              </ToolRow>
            </ToolRows>
            <Launcher />
          </Group>

          <Group $w={369}>
            <ToolRows>
              <ToolRow>
                <Ic $ml={14} width={25} height={24} viewBox="0 0 25 24" $sw={1.5}>
                  <path d="M9 4h15M9 12h15M9 20h15" /><circle cx="3" cy="4" r="2" /><circle cx="3" cy="12" r="2" /><circle cx="3" cy="20" r="2" />
                </Ic>
                <Caret $ml={5} />
                <Ic $ml={15} width={24} height={24} viewBox="0 0 24 24" $sw={1.5}>
                  <path d="M9 4h15M9 12h15M9 20h15M3 1v6M1 10h4l-4 4h4M1 18h4l-2 2 2 2H1" />
                </Ic>
                <Caret $ml={5} />
                <Ic $ml={14} width={24} height={24} viewBox="0 0 24 24" $sw={1.5}>
                  <path d="M0 2h24M12 9h12M12 15h12M0 22h24M10 12H1M5 8l-4 4 4 4" />
                </Ic>
                <Ic $ml={12} width={24} height={24} viewBox="0 0 24 24" $sw={1.5}>
                  <path d="M0 2h24M12 9h12M12 15h12M0 22h24M0 12h9M6 8l4 4-4 4" />
                </Ic>
                <Ic $ml={13} width={32} height={26} viewBox="0 0 32 26" $sw={1.5}>
                  <path d="M7 24L16 9l9 15M11 18h10M2 3h10M2 3l3-2M2 3l3 3M20 3h10M30 3l-3-2M30 3l-3 3" />
                </Ic>
                <Ic $ml={12} width={27} height={26} viewBox="0 0 27 26" $sw={1.5}>
                  <path d="M1 23L7 2h8v21" /><path d="M5 15h10v8H3z" fill="#cfd2d6" /><path d="M21 1v23M17 19l4 5 4-5" />
                </Ic>
                <Ic $ml={11} width={26} height={26} viewBox="0 0 26 26" $sw={1.5}>
                  <path d="M1 11h22V1M1 11l4-4M1 11l4 4M1 21h24M25 21l-4-4M25 21l-4 4" />
                </Ic>
                <Caret $ml={4} />
                <Ic $ml={13} width={25} height={22} viewBox="0 0 25 22" $sw={1.5}>
                  <path d="M1 4h23M1 4v6M6 4v4M11 4v4M15 4v4M19 4v4M24 4v6M1 14v7h3M24 14v7h-3M12 14v7h3" />
                </Ic>
              </ToolRow>
              <ToolRow>
                <ActiveAlign $ml={8}><AlignIcon kind="l" /></ActiveAlign>
                <AlignIcon ml={9} kind="c" />
                <AlignIcon ml={16} kind="r" />
                <AlignIcon ml={14} kind="j" />
                <Ic $ml={14} width={25} height={26} viewBox="0 0 25 26" $sw={1.5}>
                  <path d="M1 1v24M24 1v24M5 13h15M5 19h15M5 24h15M5 5h15M5 5l3-3M5 5l3 3M20 5l-3-3M20 5l-3 3" />
                </Ic>
                <VSep $ml={11} $h={28} />
                <Ic $ml={11} width={23} height={28} viewBox="0 0 23 28" $sw={1.5}>
                  <path d="M5 1v26M1 5l4-4 4 4M1 23l4 4 4-4M13 5h10M13 11h10M13 17h10M13 23h10" />
                </Ic>
                <Caret $ml={7} />
                <VSep $ml={13} $h={28} />
                <Ic $ml={11} width={22} height={26} viewBox="0 0 22 26" $sw={1.4}>
                  <path d="M11 1l9 9-9 9-9-9z" /><path d="M1 19h20v6H1z" fill="#e0e2e6" />
                </Ic>
                <Caret $ml={9} />
                <Ic $ml={13} width={22} height={24} viewBox="0 0 22 24" $sw={1.5}>
                  <path d="M1 1h20v22H1z" /><path d="M11 4v16M4 12h14" strokeDasharray="2 2" />
                </Ic>
                <Caret $ml={8} />
              </ToolRow>
            </ToolRows>
            <Launcher />
          </Group>

          <FlowGroup $w={432}>
            <StyleGallery>
              <StyleCell $active>
                <StyleSample $s={24}>AaBbCcI</StyleSample>
                <StyleName>正文</StyleName>
              </StyleCell>
              <StyleCell>
                <StyleSample $s={32} $b>AaBbCcI</StyleSample>
                <StyleName>标题 1</StyleName>
              </StyleCell>
              <StyleCell>
                <StyleSample $s={29} $b>AaBbCcI</StyleSample>
                <StyleName>标题 2</StyleName>
              </StyleCell>
              <StyleCell>
                <StyleSample $s={23} $b>AaBbCcI</StyleSample>
                <StyleName>标题 3</StyleName>
              </StyleCell>
              <GalleryArrows>
                <Caret $c="#bbb" $up />
                <Caret $c="#777" />
                <Ic width={10} height={12} viewBox="0 0 10 12" $c="#777"><path d="M1 1h8" /><path d="M1 5l4 5 4-5z" fill="#777" /></Ic>
              </GalleryArrows>
            </StyleGallery>
          </FlowGroup>

          <FlowGroup $w={280}>
            <LargeTool $w={82} $ml={14}>
              <LargeIcon>
                <Ic width={34} height={36} viewBox="0 0 34 36" $sw={1.5}>
                  <path d="M1 4h12M1 11h12M1 18h12M15 23L23 2l8 21M18 15h10M15 27h18M15 34h18" />
                  <path d="M1 25h9v9H1z" fill="#e1e4e8" />
                </Ic>
              </LargeIcon>
              <LargeLabel>文字排版<Caret /></LargeLabel>
            </LargeTool>
            <LargeTool $w={82} $ml={33}>
              <LargeIcon>
                <Ic width={36} height={36} viewBox="0 0 36 36" $sw={1.6}>
                  <circle cx="15" cy="15" r="13.500" fill="#e7e9ec" /><path d="M25 25l10 10" />
                </Ic>
              </LargeIcon>
              <LargeLabel>查找替换<Caret /></LargeLabel>
            </LargeTool>
            <LargeTool $w={46} $ml={18}>
              <LargeIcon>
                <Ic width={26} height={36} viewBox="0 0 26 36" $sw={1.4}>
                  <path d="M2 1v30l6-6 4 10 5-2-4-9h11z" />
                </Ic>
              </LargeIcon>
              <LargeLabel>选择<Caret /></LargeLabel>
            </LargeTool>
          </FlowGroup>
        </Ribbon>

        <Workspace>
          <Canvas>
            <Ruler>
              <LCorner />
              <RulerBand>
                {rulerLabels.map((label, i) => (
                  <RulerCell key={i}>
                    <RulerHalf>{label}</RulerHalf>
                    <RulerHalf />
                  </RulerCell>
                ))}
                <RulerEnd />
              </RulerBand>
              <RulerMark $x={636} $y={12} width={14} height={22} viewBox="0 0 14 22"><path d="M7 1l6 6v6H1V7zM1 13h12v8H1z" /></RulerMark>
              <RulerMark $x={661} $y={2} width={14} height={9} viewBox="0 0 14 9"><path d="M1 1h12L7 8z" /></RulerMark>
              <RulerMark $x={1219} $y={13} width={14} height={10} viewBox="0 0 14 10"><path d="M7 1l6 5v3H1V6z" /></RulerMark>
            </Ruler>
            <Page $h={350} $pt={7.5}>
              <TocList rows={page1} />
              <MarginRow $mt={10} $h={27}>
                <CropMark $pos="tl" />
                <Folio>III</Folio>
                <CropMark $pos="tr" />
              </MarginRow>
            </Page>
            <Page $h={500} $mt={19}>
              <MarginRow $mt={76} $h={25}>
                <CropMark $pos="bl" />
                <CropMark $pos="br" />
              </MarginRow>
              <TocList rows={page2} />
            </Page>
          </Canvas>
          <ScrollTrack>
            <ScrollThumb />
            <ScrollDown>
              <Ic width={14} height={6} viewBox="0 0 14 6" $c="#eee" $sw={1.5}><path d="M1 1l6 4 6-4" /></Ic>
            </ScrollDown>
            <ScrollGlyphs>
              <Ic width={12} height={12} viewBox="0 0 12 12" $sw={0}><path d="M6 0l5 5H1zM6 6l5 5H1z" fill="#9ea2aa" /></Ic>
              <Ic width={11} height={10} viewBox="0 0 11 10" $c="#8e929a" $sw={1.2}><rect x="1" y="1" width="9" height="8" rx="1.500" /></Ic>
              <Ic width={12} height={12} viewBox="0 0 12 12" $sw={0}><path d="M1 1h10L6 6zM1 7h10l-5 5z" fill="#9ea2aa" /></Ic>
            </ScrollGlyphs>
          </ScrollTrack>
          <SideBar>
            <SideIcons>
              <Ic width={26} height={26} viewBox="0 0 26 26" $sw={1.4}>
                <path d="M20 1l4 3L9 21l-6 1 1-6zM1 25h23" />
              </Ic>
              <Ic width={22} height={26} viewBox="0 0 22 26" $sw={1.5}>
                <path d="M2 2l18 11-7 1 4 8-3 2-4-8-6 5z" />
              </Ic>
              <Ic width={26} height={26} viewBox="0 0 26 26" $sw={1.1} $c="#666">
                <circle cx="5" cy="7" r="2.700" /><path d="M8 7h17M1 18h15M21 18h4" /><circle cx="18.500" cy="18" r="2.700" />
              </Ic>
              <Ic width={26} height={26} viewBox="0 0 26 26" $sw={1.4}>
                <ellipse cx="13" cy="13" rx="11.500" ry="11" /><path d="M9.500 10c0-5 7-5 7 0 0 3-3.500 3-3.500 6M13 19v1.500" />
              </Ic>
              <Ic width={26} height={26} viewBox="0 0 26 26" $sw={1.4}>
                <path d="M4 1h15l4 6c0 3-4 4-6 1-1 3-5 3-6 0-1 3-7 3-8-1zM3 10v11h8M17 14c2-3 6-3 7-3 0 3-1 7-5 7-3 0-3-2-2-4zM9 22c1-4 6-4 8-2-1 3-6 5-8 2z" />
              </Ic>
              <Ic width={26} height={26} viewBox="0 0 26 26" $sw={1.4}>
                <path d="M9 21C4 20 1 17 1 12 1 6 6 2 13 2s12 4 12 10c0 5-3 8-8 9l-1 3h-6z" /><path d="M15 6l-7 8h5l-2 6 7-8h-5z" />
              </Ic>
            </SideIcons>
            <SideFoot>
              <Ic width={24} height={6} viewBox="0 0 24 6" $sw={1.4}>
                <circle cx="3" cy="3" r="2.300" /><circle cx="12" cy="3" r="2.300" /><circle cx="21" cy="3" r="2.300" />
              </Ic>
            </SideFoot>
          </SideBar>
        </Workspace>

        <StatusBar>
          <StatusText $ml={14} $w={94} $ls={-.3}>页面: 4/34</StatusText>
          <StatusText $ml={13} $w={101} $ls={.6}>字数: 11178</StatusText>
          <SpellCheck>
            <Ic width={23} height={23} viewBox="0 0 23 23" $sw={1.4}>
              <path d="M1 2c4-1 8-1 10.500 1C14 1 18 1 22 2v17H13l-1.500 3L10 19H1zM6 10l4 4 7-8" />
            </Ic>
            拼写检查<Caret $ml={3} />
          </SpellCheck>
          <Ic $ml={18} width={22} height={23} viewBox="0 0 22 23" $sw={1.4}>
            <path d="M1 2c4-1 7-1 10 1 3-2 6-2 10-1v17h-8l-2 3-2-3H1zM7 7l8 8M15 7l-8 8" />
          </Ic>
          <StatusText $ml={6}>文档校对</StatusText>
          <StatusText $ml={27}>兼容模式</StatusText>
          <Letter $ml={27} $w={23} $s={27} $serif>T<small>?</small></Letter>
          <StatusText $ml={6}>缺失字体</StatusText>
          <StatusRight>
            <Ic width={25} height={28} viewBox="0 0 25 28" $sw={1.4}>
              <path d="M12.500 7c6 0 10 4 11 7-1 5-5 11-11 11S2 19 1.500 14c1-3 5-7 11-7z" /><circle cx="12.500" cy="16" r="5.500" /><path d="M12.500 1v3M4 3l2 3M21 3l-2 3" />
            </Ic>
            <ViewActive>
              <Ic width={19} height={25} viewBox="0 0 19 25" $sw={1.4}>
                <path d="M1 1h12l5 5v18H1zM5 12h9M5 17h9" />
              </Ic>
            </ViewActive>
            <Ic $ml={13} width={24} height={24} viewBox="0 0 24 24" $sw={1.5}>
              <path d="M1 2h2M8 2h15M1 9h2M8 9h15M1 16h2M8 16h15M1 22h2M8 22h15" />
            </Ic>
            <Ic $ml={14} width={24} height={24} viewBox="0 0 24 24" $sw={1.5}>
              <path d="M1 1h22v19h-9l-2 3-2-3H1zM12 1v19" />
            </Ic>
            <Ic $ml={15} width={24} height={24} viewBox="0 0 24 24" $sw={1.3}>
              <circle cx="12" cy="12" r="10.500" /><ellipse cx="12" cy="12" rx="5" ry="10.500" /><path d="M1.500 8.500h21M1.500 15.500h21M12 1.500v21" />
            </Ic>
            <Ic $ml={15} width={25} height={25} viewBox="0 0 25 25" $sw={1.4}>
              <path d="M19 1l5 4L9 20l-7 1 1-7zM1 24h23" />
            </Ic>
            <VSep $ml={16} $h={26} />
            <Ic $ml={17} width={24} height={24} viewBox="0 0 24 24" $sw={1.5}>
              <path d="M7 1H1v6M17 1h6v6M7 23H1v-6M17 23h6v-6M7 6h10v12H7z" />
            </Ic>
            <StatusText $ml={10} $w={38}>70%</StatusText>
            <Caret $ml={8} $c="#aaa" />
            <Ic $ml={19} width={15} height={4} viewBox="0 0 15 4" $sw={2.6}><path d="M0 2h15" /></Ic>
            <ZoomTrack><ZoomKnob /></ZoomTrack>
            <Ic $ml={4} width={15} height={15} viewBox="0 0 15 15" $sw={2.4}><path d="M7.500 0v15M0 7.500h15" /></Ic>
            <Ic $ml={18} width={22} height={22} viewBox="0 0 22 22" $sw={1.5}>
              <path d="M2 7V2h5M2 2l5 5M20 7V2h-5M20 2l-5 5M2 15v5h5M2 20l5-5M20 15v5h-5M20 20l-5-5" />
            </Ic>
          </StatusRight>
        </StatusBar>

        <Taskbar>
          <Ic $ml={25} width={23} height={23} viewBox="0 0 23 23" $sw={0}>
            <path d="M0 3l10-1.500V11H0zM11.500 1.300L23 0v11H11.500zM0 12.500h10V22L0 20.500zM11.500 12.500H23V23l-11.500-1.500z" fill="#f5f7f9" />
          </Ic>
          <Ic $ml={46} width={34} height={34} viewBox="0 0 34 34" $sw={0}>
            <path d="M16 16C8 17 2 14 2 8s7-9 12-6c3 2 3 8 2 14zM18 16c-1-8 2-15 8-15s9 7 6 12c-2 3-8 4-14 3zM18 18c8-1 14 2 14 8s-7 9-12 6c-3-2-3-8-2-14zM16 18c1 8-2 15-8 15s-9-7-6-12c2-3 8-4 14-3z" fill="#f0f1f2" />
          </Ic>
          <SearchBox>
            <SearchHint>
              <Ic $ml={8} width={24} height={28} viewBox="0 0 24 28" $c="#2b8de0" $sw={4}>
                <path d="M3 14h17c0-6-3-10-8-10S3 9 3 15s4 10 9 10c4 0 6-2 8-4" />
              </Ic>
              <Caret $ml={5} $c="#999" $up />
              <SearchPhrase>多地出台稳楼市政策</SearchPhrase>
            </SearchHint>
            <SearchBtn>搜索一下</SearchBtn>
          </SearchBox>
          <VSep $ml={12} $h={44} />
          <TaskApp $ml={27} $w={60}>
            <Ic width={37} height={42} viewBox="0 0 37 42" $c="#27a0e6" $sw={6}>
              <path d="M6 22h25c0-9-4-15-12-15S5 14 5 23s6 15 14 15c6 0 9-3 11-6" />
              <path d="M3 35C6 20 20 4 34 3" stroke="#e8b62c" strokeWidth="2" />
            </Ic>
          </TaskApp>
          <TaskApp $ml={15} $w={60}>
            <Ic width={31} height={40} viewBox="0 0 31 40" $sw={0}>
              <ellipse cx="15.500" cy="20" rx="15" ry="19" fill="#6cc24a" />
              <path d="M8 20h15c0-5-3-8-7-8s-8 4-8 9 3 9 8 9c3 0 5-1 7-4" stroke="#eef7e8" strokeWidth="3.500" fill="none" />
            </Ic>
          </TaskApp>
          <TaskApp $ml={15} $w={62} $open>
            <Ic width={32} height={32} viewBox="0 0 32 32" $sw={0}>
              <path d="M1 3h12l3 4h15v22H1z" fill="#f3c94f" />
              <path d="M1 12h30v17H1z" fill="#f8dc7e" />
              <path d="M9 22h14v10H9z" fill="#3a8edb" />
            </Ic>
          </TaskApp>
          <TaskApp $ml={12} $w={63} $open>
            <Ic width={36} height={44} viewBox="0 0 36 44" $sw={0}>
              <ellipse cx="18" cy="22" rx="18" ry="21" fill="#d5601f" />
              <path d="M7 12l11 7 11-7-2 16-9 9-9-9z" fill="#1f2226" />
              <circle cx="12" cy="22" r="4" fill="#e9d9b0" /><circle cx="24" cy="22" r="4" fill="#e9d9b0" />
              <path d="M15 31h6v6h-6z" fill="#f1f1f1" />
            </Ic>
          </TaskApp>
          <TaskApp $ml={8} $w={72} $open $active>
            <Ic width={41} height={34} viewBox="0 0 41 34" $sw={0}>
              <path d="M1 1h10l4 13 5-13h4l-9 32h-5zM25 1h15L30 33h-6l5-16-3 6-3-9z" fill="#d32a2a" />
            </Ic>
          </TaskApp>
          <Ic $ml={149} width={36} height={40} viewBox="0 0 36 40" $sw={0}>
            <path d="M20 4c6 0 10 5 10 12H18c-2-5-1-10 2-12z" fill="#f3b63f" />
            <path d="M8 30C2 30 0 26 0 23s3-7 7-7c1-5 5-7 9-7 5 0 9 4 9 8 4 0 6 3 6 6s-2 7-6 7z" fill="#eef0f3" />
            <circle cx="28" cy="34" r="5" fill="#d62845" />
          </Ic>
          <Weather>
            <Temp>30°C</Temp>
            <span>多云</span>
            <CpuTop>16%</CpuTop>
            <CpuBottom>CPU利用率</CpuBottom>
          </Weather>
          <Ic $ml={22} width={25} height={32} viewBox="0 0 25 32" $sw={0}>
            <ellipse cx="12.500" cy="16" rx="12.500" ry="15.500" fill="#d5121a" />
            <path d="M4 11l6 3-1 3-4-1zM21 11l-6 3 1 3 4-1zM7 22c3-3 8-3 11 0l-5.500 4z" fill="#1b1b1b" />
          </Ic>
          <Ic $ml={13} width={19} height={30} viewBox="0 0 19 30" $sw={0}>
            <path d="M5 0h9v8H5z" fill="#cfd5da" /><path d="M2 8h15v18l-7 4-8-4z" fill="#2c83c5" />
          </Ic>
          <Ic $ml={15} width={25} height={34} viewBox="0 0 25 34" $sw={0}>
            <rect width="23" height="31" rx="3" fill="#2979d8" />
            <path d="M7 8h8v5H9v9" stroke="#fff" strokeWidth="2.500" fill="none" />
            <path d="M14 20h11v8l-5 6-6-6z" fill="#3fae49" />
          </Ic>
          <Ic $ml={12} width={24} height={30} viewBox="0 0 24 30" $sw={0}>
            <path d="M12 0l12 4v11c0 8-6 12-12 15C6 27 0 23 0 15V4z" fill="#2f8ff0" />
            <path d="M5 9h14l-7 13z" fill="#e9f3ff" />
          </Ic>
          <Ic $ml={15} width={20} height={24} viewBox="0 0 20 24" $c="#dfe3e7" $sw={1.2}>
            <path d="M1 22C2 12 8 4 19 2M6 22c1-7 5-12 13-14M11 22c1-4 3-7 8-8" /><circle cx="18" cy="21" r="1.500" fill="#dfe3e7" />
          </Ic>
          <Ic $ml={13} width={22} height={26} viewBox="0 0 22 26" $sw={0}>
            <path d="M11 1c5 0 7 4 7 9 0 4 1 7 4 9H0c3-2 4-5 4-9 0-5 2-9 7-9zM7 21h8c0 3-2 4-4 4s-4-1-4-4z" fill="#f7f8f9" />
          </Ic>
          <Ic $ml={13} width={24} height={32} viewBox="0 0 24 32" $sw={0}>
            <rect width="24" height="32" rx="2" fill="#2d3a2b" />
            <ellipse cx="12" cy="16" rx="10" ry="9" fill="#7eb02c" />
            <path d="M5 16c3-5 10-5 14 0-4 5-11 5-14 0z" fill="#22301a" />
          </Ic>
          <QQ ml={12} />
          <QQ ml={16} />
          <Ic $ml={14} width={24} height={22} viewBox="0 0 24 22" $c="#eceef1" $sw={1.4}>
            <path d="M2 1v7M6 1v7M1 8h6v3H1zM4 11v6" /><path d="M8 6h15v14H8z" fill="#eceef1" />
          </Ic>
          <Ic $ml={13} width={21} height={34} viewBox="0 0 21 34" $sw={0}>
            <ellipse cx="10.500" cy="17" rx="10.500" ry="16.500" fill="#1b72d8" />
            <path d="M6 11l9 11-5 5V7l5 5-9 11" stroke="#cfe3ff" strokeWidth="1.300" fill="none" />
          </Ic>
          <Ic $ml={17} width={16} height={30} viewBox="0 0 16 30" $c="#d8dbdf" $sw={1.4}><path d="M1 1h14v28H1zM1 24h14" /></Ic>
          <Ic $ml={16} width={22} height={32} viewBox="0 0 22 32" $sw={0}>
            <ellipse cx="11" cy="16" rx="11" ry="15.500" fill="#3aa23c" />
            <circle cx="11" cy="16" r="6" fill="#e6d02e" />
          </Ic>
          <Ic $ml={14} width={15} height={26} viewBox="0 0 15 26" $c="#d8dbdf" $sw={1.2}><path d="M1 9h5l8-7v22l-8-7H1z" /></Ic>
          <Letter $ml={25} $w={16} $s={17} $c="#e7e9ec" $cjk>中</Letter>
          <Ic $ml={22} width={26} height={34} viewBox="0 0 26 34" $sw={0}>
            <rect width="26" height="34" rx="6" fill="#2e80db" />
            <ellipse cx="13" cy="16" rx="7" ry="9" fill="none" stroke="#cfe4ff" strokeWidth="2" />
            <path d="M16 22l4 6" stroke="#cfe4ff" strokeWidth="2" />
          </Ic>
          <Clock>
            16:20 周二
            <br />
            2022/9/13
            <TrayBadge />
          </Clock>
          <MsgWrap>
            <Ic width={22} height={24} viewBox="0 0 22 24" $sw={0}><path d="M0 0h22v18H9l-5 5v-5H0z" fill="#f3f4f6" /></Ic>
            <MsgBadge>7</MsgBadge>
          </MsgWrap>
        </Taskbar>
      </Main>

      <ScrollChip />
      <Gadget>
        <GadgetPill>
          <GadgetRow>
            <Ic width={10} height={12} viewBox="0 0 10 12" $sw={0}><path d="M5 0l5 6H7v6H3V6H0z" fill="#2e9bd6" /></Ic>
            <span>0<small>K/s</small></span>
          </GadgetRow>
          <GadgetRow>
            <Ic width={10} height={12} viewBox="0 0 10 12" $sw={0}><path d="M5 12L0 6h3V0h4v6h3z" fill="#2f9d57" /></Ic>
            <span>0.6<small>K/s</small></span>
          </GadgetRow>
        </GadgetPill>
        <GadgetDial>
          <DialRing width={89} height={89} viewBox="0 0 89 89">
            <defs>
              <linearGradient id="dial" x1="0" y1="0" x2="0" y2="1">
                <stop offset="0" stopColor="#3ec2b4" />
                <stop offset="1" stopColor="#d3d65a" />
              </linearGradient>
            </defs>
            <path d="M44 5.500A39 39 0 0 1 22 76.500" stroke="url(#dial)" strokeWidth="3" />
          </DialRing>
          <DialValue>60<small>%</small></DialValue>
        </GadgetDial>
      </Gadget>
      <Pointer width={14} height={20} viewBox="0 0 14 20">
        <path d="M1 1v15l4-3 2.500 5.500 2.500-1L7.500 12H13z" fill="#fff" stroke="#000" strokeWidth="1.200" />
      </Pointer>
      <Watermark>CSDN @Q03295391197</Watermark>
    </Root>
  );
}
